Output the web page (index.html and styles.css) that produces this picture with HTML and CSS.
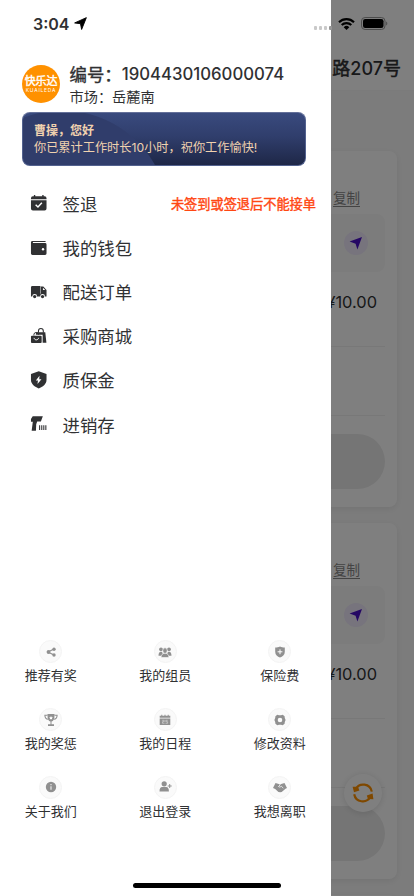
FILE: index.html
```html
<!DOCTYPE html>
<html lang="zh-CN">
<head>
<meta charset="utf-8">
<title>快乐达</title>
<link rel="stylesheet" href="styles.css">
</head>
<body>
<div class="phone">
  <main class="orders">
    <header class="address">路<span>207</span>号</header>
    <div class="list">
      <section class="card">
        <div class="copy"><span>复制</span></div>
        <div class="place"><span class="nav"><svg viewBox="0 0 24 24"><path d="M18 6 13.400 18.400 11.600 12.800 5.600 10.600Z"/></svg></span></div>
        <div class="price">¥10.00</div>
        <div class="detail"></div>
        <div class="action"></div>
      </section>
      <section class="card">
        <div class="copy"><span>复制</span></div>
        <div class="place"><span class="nav"><svg viewBox="0 0 24 24"><path d="M18 6 13.400 18.400 11.600 12.800 5.600 10.600Z"/></svg></span></div>
        <div class="price">¥10.00</div>
        <div class="detail"></div>
        <div class="action"></div>
      </section>
      <section class="card"></section>
    </div>
  </main>
  <div class="refresh"><svg viewBox="0 0 22 22"><g fill="none" stroke="#ff9100" stroke-width="2.200"><path d="M3.600 7.200A8.700 8.700 0 0 1 19.800 9.600M18.400 14.800A8.700 8.700 0 0 1 2.200 12.200"/></g><path fill="#ff9100" d="M.6 4.800 2 10.200 7.400 8.600 6 4.800ZM21.400 17.200 20.600 11.600 14.800 13.400 16 17Z"/></svg></div>
  <div class="shade"></div>

  <aside class="drawer">
    <div class="profile">
      <div class="logo"><b>快乐达</b><small>KUAILEDA</small></div>
      <div class="who">
        <div class="number"><span>编号：</span><span class="digits">1904430106000074</span></div>
        <div class="market">市场：岳麓南</div>
      </div>
    </div>
    <div class="banner">
      <strong>曹操，您好</strong>
      <p>你已累计工作时长10小时，祝你工作愉快!</p>
    </div>
    <nav class="menu">
      <a><svg viewBox="0 0 18 18"><path fill="#303133" d="M1 6.300h16v8.700a2 2 0 0 1-2 2H3a2 2 0 0 1-2-2ZM3 2.300h1V1h1.400v1.300h7.200V1H14v1.300h1a2 2 0 0 1 2 2v1H1v-1a2 2 0 0 1 2-2Z"/><path d="m5.800 11 2.400 2.300 4-4.300" fill="none" stroke="#fff" stroke-width="1.500"/></svg><span>签退</span><em>未签到或签退后不能接单</em></a>
      <a><svg viewBox="0 0 18 18"><path fill="#303133" d="M2.500 2H16v1.200H3v1H15.500A1.500 1.500 0 0 1 17 5.700V15a1.500 1.500 0 0 1-1.500 1.500h-13A1.500 1.500 0 0 1 1 15V3.500A1.500 1.500 0 0 1 2.500 2Z"/><circle cx="13.400" cy="10.500" r="1.200" fill="#fff"/></svg><span>我的钱包</span></a>
      <a><svg viewBox="0 0 18 18"><path fill="#303133" d="M1.800 3h8.900v8h.5V3.600h2.500l3.300 3.500v6.800h-1.600a2.500 2.500 0 0 0-5 0H7.300a2.500 2.500 0 0 0-5 0H1V4Z"/><path d="M13.300 4.800v2.500h2.500Z" fill="#fff"/><circle cx="4.800" cy="14" r="1.700" fill="#303133"/><circle cx="12.900" cy="14" r="1.700" fill="#303133"/></svg><span>配送订单</span></a>
      <a><svg viewBox="0 0 18 18"><path fill="none" stroke="#303133" stroke-width="1.100" d="M8.700 6V4a2.500 2.500 0 0 1 5 0v2"/><path fill="#303133" d="M6.300 5.300h9.400l1.200 11H13V8H6Z"/><rect x="1" y="9" width="11" height="7.500" rx="1" fill="#303133"/><path d="M4 8.800V8a2.400 2.400 0 0 1 4.800 0" fill="none" stroke="#303133" stroke-width="1"/><path d="M4.200 11.200c.4 2.700 4.200 2.700 4.600 0" fill="none" stroke="#fff" stroke-width="1"/></svg><span>采购商城</span></a>
      <a><svg viewBox="0 0 18 18"><path fill="#303133" d="M9 .2 17 3.200v6c0 4-4 7.300-8 8.700-4-1.400-8-4.700-8-8.700v-6Z"/><path fill="#fff" d="M9.800 4.800 6 9.700h2.200l-.5 3.700 4.100-5H9.500Z"/></svg><span>质保金</span></a>
      <a><svg viewBox="0 0 18 18"><path fill="#303133" d="M2.800 1.200h10.400l-2 5.600H7.400l-1 2.600-.3 6.900-4.400-.2 1.200-9.100H1V4Z"/><path d="M9.900 10.500v5M12.100 10.500v5M14.200 10.500v5M16.300 10.500v5" stroke="#303133" stroke-width="1.100"/></svg><span>进销存</span></a>
    </nav>
    <div class="tools">
      <div class="tool"><i><svg viewBox="0 0 14 14"><path d="M10 4 4 7l6 3" fill="none" stroke="#909090" stroke-width="1.300"/><circle cx="4.500" cy="7" r="1.900"/><circle cx="10" cy="4.200" r="1.700"/><circle cx="10" cy="10" r="1.700"/></svg></i>推荐有奖</div>
      <div class="tool"><i><svg viewBox="0 0 14 14"><circle cx="3" cy="4.300" r="1.900"/><circle cx="11" cy="4.300" r="1.900"/><path d="M.5 10.700c0-2.600.8-3.900 2.500-3.900s2 2 1.700 3.900ZM13.500 10.700c0-2.600-.8-3.900-2.500-3.900s-2 2-1.700 3.900Z"/><g stroke="#fafafa" stroke-width=".6"><path d="M3 12.500c.3-2.700 1.500-4.300 4-4.300s3.700 1.600 4 4.300Z"/><ellipse cx="7" cy="5.600" rx="2.200" ry="2.800"/></g></svg></i>我的组员</div>
      <div class="tool"><i><svg viewBox="0 0 14 14"><path d="M7 1.600c1.500.8 3 1 4.800 1v4.200c0 3.200-2.300 4.900-4.800 5.700-2.500-.8-4.800-2.500-4.800-5.700V2.600c1.800 0 3.300-.2 4.800-1Z"/><path d="M7 4.400v4.800M4.600 6.800h4.800" stroke="#fff" stroke-width="1"/></svg></i>保险费</div>
      <div class="tool"><i><svg viewBox="0 0 14 14"><path d="M3.500 1h7v1.500c0 3.800-1 5.700-3 6v2.800H10V13H4v-1.700h2.500V8.500c-2-.3-3-2.200-3-6Z"/><path d="M3.500 2.300H.9c0 2.500 1 3.800 3.300 4M10.500 2.300h2.600c0 2.500-1 3.800-3.300 4" fill="none" stroke="#909090" stroke-width="1.100"/><path d="m7 3 .6 1.200 1.300.2-.9.900.2 1.300L7 6l-1.200.6.2-1.300-.9-.9 1.300-.2Z" fill="#fff"/></svg></i>我的奖惩</div>
      <div class="tool"><i><svg viewBox="0 0 14 14"><path d="M1.700 2.700h1.600V1.700h1v1h2.200v-1h1v1h2.200v-1h1v1h1.600v2H1.700ZM1.700 5.500h10.600v6.500H1.700Z"/><path d="M4.200 7.300h2v1.400H4.500v1.600h2M9.700 7.300H7.800v1.400h1.800v1.600H7.500" fill="none" stroke="#dedede" stroke-width=".6"/></svg></i>我的日程</div>
      <div class="tool"><i><svg viewBox="0 0 14 14"><path fill-rule="evenodd" d="M4.300 1.800 6 2.300h2l1.700-.5 1.900 1.400.2 1.700L12.600 7l-.8 2.100-.2 1.700-1.900 1.400-1.700-.5H6l-1.700.5-1.900-1.400-.2-1.700L1.400 7l.8-2.100.2-1.700ZM7 4.700a2.300 2.300 0 1 0 0 4.600 2.300 2.300 0 0 0 0-4.600Z"/></svg></i>修改资料</div>
      <div class="tool"><i><svg viewBox="0 0 14 14"><circle cx="7" cy="7" r="5.200"/><path d="M7 6.300v3.500M7 4v1.300" stroke="#e9e9e9" stroke-width="1.200"/></svg></i>关于我们</div>
      <div class="tool"><i><svg viewBox="0 0 14 14"><circle cx="6.200" cy="3.800" r="2.600"/><path d="M1.500 11.600c0-3 .8-4.600 2.700-4.600h4c1.900 0 2.700 1.600 2.700 4.600Z"/><path d="M9.700 6h4M11.700 4v4" stroke="#909090" stroke-width="1"/></svg></i>退出登录</div>
      <div class="tool"><i><svg viewBox="0 0 14 14"><path d="M2.500 3 5.800 4l1.200.7L8.200 4l3.300-1 2.500 5-1.500.7-3.800 3.300-1.500.3-1.800-.4-3.200-2.900L0 8Z"/><path d="M7.200 4.800 5.500 6.500c.8.900 2 .4 2.800-.2l2 1.800" fill="none" stroke="#fafafa" stroke-width=".8"/></svg></i>我想离职</div>
    </div>
    <div class="home"></div>
  </aside>

  <div class="status">
    <span class="time">3:04</span>
    <svg class="loc" viewBox="0 0 14 14"><path d="M13.300.7 8.200 13.400 7 7.200 .7 6.400Z" stroke="#000" stroke-width="1" stroke-linejoin="round"/></svg>
    <span class="signal"><i></i><i></i><i></i><i></i></span>
    <svg class="wifi" viewBox="0 0 17 12"><g fill="none" stroke="#000" stroke-width="2.100"><path d="M1 4.200a10.700 10.700 0 0 1 15 0M3.700 7.100a6.900 6.900 0 0 1 9.600 0"/></g><path d="M5.700 9.200a4 4 0 0 1 5.600 0L8.500 12Z"/></svg>
    <svg class="battery" viewBox="0 0 27 13"><rect x=".5" y=".5" width="23.500" height="12" rx="3.600" fill="none" stroke="#4c4c4c"/><rect x="2" y="2" width="20.500" height="9" rx="2.200"/><path d="M25.200 4.500c1.500.6 1.500 3.400 0 4Z" fill="#4c4c4c"/></svg>
  </div>
</div>
</body>
</html>
```
FILE: styles.css
```css
* { box-sizing: border-box; margin: 0; padding: 0; }
body { font-family: Inter, "Noto Sans CJK SC", sans-serif; color: #303133; }
.phone { position: relative; width: 414px; height: 896px; overflow: hidden; background: #fff; }
svg { display: block; flex: none; }

.orders { height: 896px; overflow: hidden; background: #f9f9f9; }
.address { height: 91px; padding: 56px 13px 0 0; background: #fff; border-bottom: 1px solid #f6f6f6; text-align: right; font-size: 18px; line-height: 26px; -webkit-text-stroke: .45px #303133; }
.address span { font-weight: 500; -webkit-text-stroke: 0; }
.list { display: flex; flex-direction: column; gap: 16px; padding: 60px 17.500px 0 18px; }
.card { flex: none; height: 356px; padding: 37px 12px 0; background: #fff; border-radius: 8px; box-shadow: 0 2px 7px rgba(0,0,0,.08); }
.copy { height: 26px; padding-right: 24.500px; text-align: right; font-size: 13.500px; line-height: 20px; color: #888; }
.copy span { border-bottom: 1px solid #888; }
.place { display: flex; justify-content: flex-end; align-items: center; height: 58px; padding-right: 17px; background: #f9f9f9; border-radius: 8px; }
.nav { width: 24px; height: 24px; border-radius: 50%; background: #eee8fa; fill: #4a10c8; }
.price { height: 75px; padding: 17px 7.500px 0 0; border-bottom: 1px solid #f0f0f0; text-align: right; font-size: 16.400px; line-height: 27px; }
.detail { height: 69px; border-bottom: 1px solid #f0f0f0; }
.action { height: 55px; margin-top: 18px; border-radius: 28px; background: #ebebeb; }
.refresh { position: absolute; left: 344px; top: 774px; width: 38px; height: 38px; padding: 8px; border-radius: 50%; background: #fff; box-shadow: 0 1px 7px rgba(0,0,0,.13); }
.shade { position: absolute; inset: 0; background: rgba(0,0,0,.5); }

.drawer { position: absolute; left: 0; top: 0; width: 331px; height: 896px; padding-top: 62px; background: #fff; display: flex; flex-direction: column; }
.profile { display: flex; height: 50px; padding-left: 22px; }
.logo { width: 38px; height: 38px; margin: 3px 9.500px 0 0; border-radius: 50%; background: #ff9100; color: #fff; text-align: center; white-space: nowrap; }
.logo b { display: block; margin-top: 10px; font-size: 11px; line-height: 12px; font-weight: 400; -webkit-text-stroke: .4px #fff; letter-spacing: -.2px; }
.logo small { display: block; margin: 0 -2px; font-size: 5px; line-height: 6px; letter-spacing: .75px; }
.number { display: flex; height: 23px; align-items: center; font-size: 17.400px; white-space: nowrap; -webkit-text-stroke: .4px #303133; }
.digits { font-size: 16.750px; font-weight: 500; -webkit-text-stroke: 0; }
.market { font-size: 14.200px; line-height: 23px; }
.banner { width: 284px; height: 54px; margin-left: 22px; padding: 9px 11px; border-radius: 8px; border: 1px solid #53628f; border-top-color: #647099; background: radial-gradient(circle at 39px 104px, #303d6b 0, #303d6b 106px, transparent 107px), linear-gradient(#394a7e, #303e6c 45%, #1e2747); color: #f0d2af; font-size: 12.200px; line-height: 17px; white-space: nowrap; }
.banner strong { display: block; font-size: 12px; }
.menu { padding: 15px 15px 0 30px; }
.menu a { display: flex; align-items: center; height: 44.200px; font-size: 17.400px; white-space: nowrap; }
.menu svg { width: 17.500px; height: 17.500px; margin-right: 15px; }
.menu em { margin-left: auto; font-style: normal; font-size: 13.200px; -webkit-text-stroke: .4px #ff4712; color: #ff4712; }
.tools { display: grid; grid-template-columns: repeat(3, 114.500px); grid-auto-rows: 67.700px; margin: auto 0 52.500px -6.500px; }
.tool { display: flex; flex-direction: column; align-items: center; font-size: 13px; line-height: 20px; }
.tool i { display: grid; place-items: center; width: 23px; height: 23px; margin-bottom: 2px; border: 1px solid #f4f4f4; border-radius: 50%; background: #fafafa; }
.tool svg { width: 14px; height: 14px; fill: #909090; }
.home { position: absolute; left: 133px; top: 883px; width: 148px; height: 5px; border-radius: 3px; background: #000; }

.status { position: absolute; left: 0; top: 0; width: 414px; height: 47px; display: flex; align-items: center; padding-left: 33px; }
.time { width: 41px; font-size: 16px; font-weight: 600; }
.loc { width: 13px; height: 13px; }
.signal { display: flex; gap: 1.500px; margin: 9px 6px 0 226.500px; }
.signal i { width: 3.600px; height: 3.600px; border-radius: 1px; background: #c9c9c9; }
.signal i:last-child { background: #969696; }
.wifi { width: 17px; height: 12px; }
.battery { width: 27px; height: 13px; margin-left: 5.500px; }
```
